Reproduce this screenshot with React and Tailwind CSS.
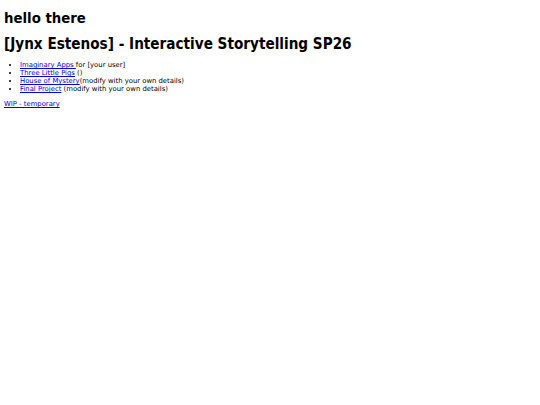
export default function App() {
  const link = "text-[#0000ee] underline";
  return (
    <div className="min-h-[405px] bg-white px-[4px] pt-[9px] text-black" style={{ fontFamily: '"DejaVu Sans", Verdana, sans-serif' }}>
      <h1 className="text-[14.8px] font-bold leading-[18px]" style={{ fontFamily: '"DejaVu Sans Condensed", "DejaVu Sans", sans-serif' }}>hello there</h1>
      <h1 className="mt-[8px] text-[15.15px] font-bold leading-[18px]" style={{ fontFamily: '"DejaVu Sans Condensed", "DejaVu Sans", sans-serif' }}>[Jynx Estenos] - Interactive Storytelling SP26</h1>
      <ul className="mt-[8px] list-disc pl-[16px] text-[6.85px] leading-[8px]">
        <li><a href="#" className={link}>Imaginary Apps </a>for [your user]</li>
        <li><a href="#" className={link}>Three Little Pigs</a> ()</li>
        <li><a href="#" className={link}>House of Mystery</a>(modify with your own details)</li>
        <li><a href="#" className={link}>Final Project</a> (modify with your own details)</li>
      </ul>
      <p className="mt-[7px] text-[6.85px] leading-[8px]"><a href="#" className={link}>WIP - temporary</a></p>
    </div>
  );
}
